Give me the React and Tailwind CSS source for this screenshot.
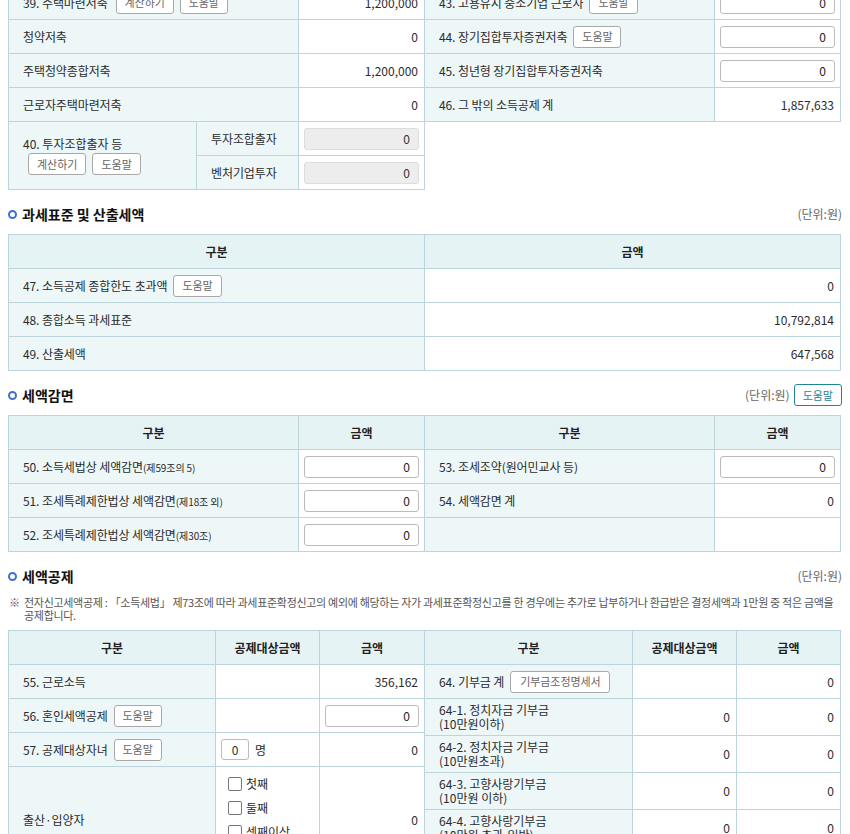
import { useState } from "react";

const Cell = ({ children, className = "" }) => (
  <div
    className={`box-border min-h-[34px] flex border-r border-b border-[#bcd4dc] ${className}`}
  >
    {children}
  </div>
);

// label cell: light teal background, text on the left
const Label = ({ children, className = "" }) => (
  <Cell
    className={`items-center gap-[6px] pl-[14px] bg-[#eef7f8] tracking-[-0.1px] ${className}`}
  >
    {children}
  </Cell>
);

// amount cell: white, right aligned
const Value = ({ children, className = "" }) => (
  <Cell className={`items-center justify-end pr-[6px] bg-white ${className}`}>
    {children}
  </Cell>
);

const Head = ({ children }) => (
  <Cell className="items-center justify-center bg-[#e6f3f5] font-bold text-[#222]">
    {children}
  </Cell>
);

const Btn = ({ children, className = "" }) => (
  <button
    type="button"
    className={`h-[22px] px-[8px] rounded-[3px] border border-[#a8a8a8] bg-white text-[11px] text-[#666] leading-none shrink-0 ${className}`}
  >
    {children}
  </button>
);

const AmountInput = ({ value = "0" }) => {
  const [val, setVal] = useState(value);
  return (
    <input
      value={val}
      onChange={(e) => setVal(e.target.value)}
      className="w-full h-[22px] rounded-[3px] border border-[#bbbbbb] bg-white pr-[8px] text-right text-[12px] text-[#222] outline-none"
    />
  );
};

const LockedInput = ({ value = "0" }) => (
  <input
    value={value}
    disabled
    className="w-full h-[22px] rounded-[3px] border border-[#dddddd] bg-[#ededed] pr-[8px] text-right text-[12px] text-[#333]"
  />
);

const InputCell = ({ value }) => (
  <Cell className="items-center px-[5px] bg-white">
    <AmountInput value={value} />
  </Cell>
);

const SectionTitle = ({ title, children }) => (
  <div className="mt-[13px] mb-[9px] h-[22px] flex items-center justify-between">
    <div className="flex items-center gap-[5px]">
      <span className="w-[9px] h-[9px] rounded-full border-2 border-[#3f6fd1]" />
      <h2 className="text-[14px] font-bold text-[#111]">{title}</h2>
    </div>
    <div className="flex items-center gap-[4px]">
      <span className="text-[12px] text-[#666]">(단위:원)</span>
      {children}
    </div>
  </div>
);

const Check = ({ label }) => (
  <label className="h-[24px] flex items-center gap-[4px]">
    <span className="w-[14px] h-[14px] rounded-[2px] border border-[#777] bg-white" />
    <span>{label}</span>
  </label>
);

const donations = [
  ["64-1. 정치자금 기부금", "(10만원이하)"],
  ["64-2. 정치자금 기부금", "(10만원초과)"],
  ["64-3. 고향사랑기부금", "(10만원 이하)"],
  ["64-4. 고향사랑기부금", "(10만원 초과-일반)"],
];

const App = () => {
  return (
    <div className="h-[834px] overflow-hidden bg-white">
      <div className="-mt-[15px] px-[8px] text-[12px] text-[#2b2b2b] font-['Noto_Sans_CJK_KR',sans-serif]">
        {/* 그 밖의 소득공제 (이어짐) */}
        <div className="flex items-start">
          <div className="w-[417px] grid grid-cols-[188px_102px_126px] border-l border-t border-[#bcd4dc]">
            <Label className="col-span-2">
              <span>39. 주택마련저축</span>
              <Btn className="ml-[2px]">계산하기</Btn>
              <Btn>도움말</Btn>
            </Label>
            <Value>1,200,000</Value>

            <Label className="col-span-2">청약저축</Label>
            <Value>0</Value>

            <Label className="col-span-2">주택청약종합저축</Label>
            <Value>1,200,000</Value>

            <Label className="col-span-2">근로자주택마련저축</Label>
            <Value>0</Value>

            <Cell className="row-span-2 flex-col justify-center pl-[14px] bg-[#eef7f8]">
              <span className="leading-[16px]">40. 투자조합출자 등</span>
              <div className="mt-[1px] ml-[5px] flex gap-[6px]">
                <Btn>계산하기</Btn>
                <Btn>도움말</Btn>
              </div>
            </Cell>
            <Label>투자조합출자</Label>
            <Cell className="items-center px-[5px] bg-white">
              <LockedInput />
            </Cell>
            <Label>벤처기업투자</Label>
            <Cell className="items-center px-[5px] bg-white">
              <LockedInput />
            </Cell>
          </div>

          <div className="w-[416px] grid grid-cols-[290px_126px] border-t border-[#bcd4dc]">
            <Label>
              <span>43. 고용유지 중소기업 근로자</span>
              <Btn>도움말</Btn>
            </Label>
            <InputCell />

            <Label>
              <span>44. 장기집합투자증권저축</span>
              <Btn>도움말</Btn>
            </Label>
            <InputCell />

            <Label>45. 청년형 장기집합투자증권저축</Label>
            <InputCell />

            <Label>46. 그 밖의 소득공제 계</Label>
            <Value>1,857,633</Value>
          </div>
        </div>

        {/* 과세표준 및 산출세액 */}
        <SectionTitle title="과세표준 및 산출세액" />
        <div className="w-[833px] grid grid-cols-[416px_416px] border-l border-t border-[#bcd4dc]">
          <Head>구분</Head>
          <Head>금액</Head>

          <Label>
            <span>47. 소득공제 종합한도 초과액</span>
            <Btn>도움말</Btn>
          </Label>
          <Value>0</Value>

          <Label>48. 종합소득 과세표준</Label>
          <Value>10,792,814</Value>

          <Label>49. 산출세액</Label>
          <Value>647,568</Value>
        </div>

        {/* 세액감면 */}
        <SectionTitle title="세액감면">
          <button
            type="button"
            className="h-[22px] px-[8px] rounded-[3px] border border-[#1e8596] bg-white text-[11px] text-[#1e8596] leading-none"
          >
            도움말
          </button>
        </SectionTitle>
        <div className="w-[833px] grid grid-cols-[290px_126px_290px_126px] border-l border-t border-[#bcd4dc]">
          <Head>구분</Head>
          <Head>금액</Head>
          <Head>구분</Head>
          <Head>금액</Head>

          <Label>
            <span>
              50. 소득세법상 세액감면
              <span className="text-[10px]">(제59조의 5)</span>
            </span>
          </Label>
          <InputCell />
          <Label>53. 조세조약(원어민교사 등)</Label>
          <InputCell />

          <Label>
            <span>
              51. 조세특례제한법상 세액감면
              <span className="text-[10px]">(제18조 외)</span>
            </span>
          </Label>
          <InputCell />
          <Label>54. 세액감면 계</Label>
          <Value>0</Value>

          <Label>
            <span>
              52. 조세특례제한법상 세액감면
              <span className="text-[10px]">(제30조)</span>
            </span>
          </Label>
          <InputCell />
          <Label />
          <Value />
        </div>

        {/* 세액공제 */}
        <SectionTitle title="세액공제" />
        <div className="flex text-[11px] leading-[13px] text-[#555] tracking-[-0.3px]">
          <span className="w-[16px] shrink-0 pl-[1px]">※</span>
          <p>
            <span className="whitespace-nowrap">
              전자신고세액공제 : 「소득세법」 제73조에 따라 과세표준확정신고의 예외에 해당하는 자가 과세표준확정신고를 한 경우에는 추가로 납부하거나 환급받은 결정세액과 1만원 중 적은 금액을
            </span>
            <br />
            공제합니다.
          </p>
        </div>

        <div className="mt-[8px] flex items-start">
          <div className="w-[417px] grid grid-cols-[207px_104px_105px] border-l border-t border-[#bcd4dc]">
            <Head>구분</Head>
            <Head>공제대상금액</Head>
            <Head>금액</Head>

            <Label>55. 근로소득</Label>
            <Value />
            <Value>356,162</Value>

            <Label>
              <span>56. 혼인세액공제</span>
              <Btn>도움말</Btn>
            </Label>
            <Value />
            <InputCell />

            <Label>
              <span>57. 공제대상자녀</span>
              <Btn>도움말</Btn>
            </Label>
            <Cell className="items-center gap-[6px] pl-[5px] bg-white">
              <input
                defaultValue="0"
                className="w-[28px] h-[21px] rounded-[3px] border border-[#bbbbbb] text-center text-[12px] outline-none"
              />
              <span>명</span>
            </Cell>
            <Value>0</Value>

            <Label>출산·입양자</Label>
            <Cell className="flex-col pl-[12px] pt-[5px] pb-[29px] bg-white">
              <Check label="첫째" />
              <Check label="둘째" />
              <Check label="셋째이상" />
            </Cell>
            <Value>0</Value>
          </div>

          <div className="w-[416px] grid grid-cols-[208px_104px_104px] border-t border-[#bcd4dc]">
            <Head>구분</Head>
            <Head>공제대상금액</Head>
            <Head>금액</Head>

            <Label>
              <span>64. 기부금 계</span>
              <Btn className="px-[9px]">기부금조정명세서</Btn>
            </Label>
            <Value />
            <Value>0</Value>

            {donations.map(([name, limit]) => (
              <div key={name} className="contents">
                <Cell className="flex-col justify-center pl-[14px] py-[4px] leading-[14px] bg-[#eef7f8]">
                  <span>{name}</span>
                  <span>{limit}</span>
                </Cell>
                <Value>0</Value>
                <Value>0</Value>
              </div>
            ))}
          </div>
        </div>
      </div>
    </div>
  );
};

export default App;
